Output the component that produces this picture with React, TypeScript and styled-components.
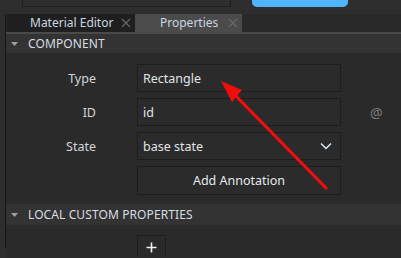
import React from "react";
import styled, { createGlobalStyle } from "styled-components";

const Global = createGlobalStyle`
  html, body { margin: 0; padding: 0; background: #2e2e2e; }
  body { font-family: "Noto Sans", "Open Sans", sans-serif; overflow: hidden; }
  #root { width: 401px; height: 258px; }
`;

const Page = styled.div`
  position: relative;
  width: 401px;
  height: 258px;
  background: #2e2e2e;
  display: flex;
  flex-direction: column;
  overflow: hidden;
`;

const TopStrip = styled.div`
  height: 14px;
  display: flex;
  align-items: flex-start;
  flex-shrink: 0;
`;

const TopBox = styled.div`
  margin-left: 22px;
  width: 207px;
  height: 6px;
  border: 1px solid #1f1f1f;
  border-top: none;
`;

const BlueButton = styled.div`
  margin-left: 21px;
  width: 96px;
  height: 7px;
  background: #50b4fe;
  border-radius: 0 0 5px 5px;
`;

const Main = styled.div`
  flex: 1;
  display: flex;
  min-height: 0;
`;

const Gutter = styled.div`
  width: 5px;
  flex-shrink: 0;
`;

const Divider = styled.div`
  width: 1px;
  height: 234px;
  background: #161616;
  flex-shrink: 0;
`;

const Panel = styled.div`
  flex: 1;
  display: flex;
  flex-direction: column;
  background: #2a2a2a;
`;

const TabBar = styled.div`
  height: 18px;
  display: flex;
  background: #292929;
  border-bottom: 2px solid #4a4a4a;
  flex-shrink: 0;
`;

const Tab = styled.div<{ $active?: boolean; $w: number; $pad: number }>`
  width: ${(p) => p.$w}px;
  padding-left: ${(p) => p.$pad}px;
  box-sizing: border-box;
  display: flex;
  align-items: center;
  justify-content: space-between;
  padding-right: 4px;
  background: ${(p) => (p.$active ? "#4b4b4b" : "#1f1f1f")};
  color: #c9d6e0;
  font-size: 12px;
  line-height: 18px;
  white-space: nowrap;
`;

const TabSpacer = styled.div`
  width: 1px;
`;

const CloseX = styled.svg`
  width: 10px;
  height: 10px;
  flex-shrink: 0;
`;

const SectionHeader = styled.div<{ $h: number }>`
  height: ${(p) => p.$h}px;
  display: flex;
  align-items: center;
  background: #333333;
  color: #d8dde2;
  font-size: 12px;
  letter-spacing: 0.1px;
  flex-shrink: 0;
`;

const Caret = styled.svg`
  width: 7px;
  height: 4px;
  margin-left: 5px;
  margin-right: 10px;
`;

const Body = styled.div<{ $pt: number; $pb: number }>`
  display: flex;
  flex-direction: column;
  gap: 6px;
  padding: ${(p) => p.$pt}px 0 ${(p) => p.$pb}px 0;
`;

const Row = styled.div`
  display: grid;
  grid-template-columns: 90px 204px 29px;
  column-gap: 41px;
  align-items: center;
  height: 28px;
`;

const Label = styled.div`
  text-align: right;
  color: #d2d6da;
  font-size: 12.5px;
`;

const Field = styled.div`
  height: 28px;
  box-sizing: border-box;
  border: 1px solid #1d1d1d;
  background: #2b2b2b;
  display: flex;
  align-items: center;
  justify-content: space-between;
  padding: 0 8px 0 5px;
  color: #e0e4e8;
  font-size: 12.5px;
`;

const Button = styled.div`
  height: 29px;
  box-sizing: border-box;
  border: 1px solid #1d1d1d;
  background: #2b2b2b;
  display: flex;
  align-items: center;
  justify-content: center;
  color: #e6e9ec;
  font-size: 12.5px;
`;

const Side = styled.div`
  color: #7b7b7b;
  font-size: 14px;
  text-align: left;
  margin-left: -12px;
`;

const PlusButton = styled.div`
  margin-left: 131px;
  width: 29px;
  height: 21px;
  box-sizing: border-box;
  border: 1px solid #1d1d1d;
  border-bottom: none;
  display: flex;
  align-items: center;
  justify-content: center;
  padding-top: 3px;
`;

const PlusIcon = styled.svg`
  width: 11px;
  height: 11px;
`;

const Arrow = styled.svg`
  position: absolute;
  left: 0;
  top: 0;
  width: 401px;
  height: 258px;
  pointer-events: none;
`;

const X = () => (
  <CloseX viewBox="0 0 10 10">
    <path d="M1 1L9 9M9 1L1 9" stroke="#6a6a6a" strokeWidth="1.1" />
  </CloseX>
);

export default function App() {
  return (
    <Page>
      <Global />
      <TopStrip>
        <TopBox />
        <BlueButton />
      </TopStrip>
      <Main>
        <Gutter />
        <Divider />
        <Panel>
          <TabBar>
            <TabSpacer />
            <Tab $w={128} $pad={23}>
              <span>Material Editor</span>
              <X />
            </Tab>
            <Tab $active $w={107} $pad={25}>
              <span>Properties</span>
              <X />
            </Tab>
          </TabBar>
          <SectionHeader $h={19}>
            <Caret viewBox="0 0 7 4">
              <path d="M0 0H7L3.5 4Z" fill="#a0a0a0" />
            </Caret>
            COMPONENT
          </SectionHeader>
          <Body $pt={11} $pb={10}>
            <Row>
              <Label>Type</Label>
              <Field>Rectangle</Field>
            </Row>
            <Row>
              <Label>ID</Label>
              <Field>id</Field>
              <Side>@</Side>
            </Row>
            <Row>
              <Label>State</Label>
              <Field>
                <span>base state</span>
                <svg width="12" height="8" viewBox="0 0 12 8">
                  <path d="M1 1.5L6 6.5L11 1.5" stroke="#dfe8f0" strokeWidth="1.5" fill="none" />
                </svg>
              </Field>
            </Row>
            <Row>
              <span />
              <Button>Add Annotation</Button>
            </Row>
          </Body>
          <SectionHeader $h={21}>
            <Caret viewBox="0 0 7 4">
              <path d="M0 0H7L3.5 4Z" fill="#a0a0a0" />
            </Caret>
            LOCAL CUSTOM PROPERTIES
          </SectionHeader>
          <Body $pt={10} $pb={0}>
            <PlusButton>
              <PlusIcon viewBox="0 0 11 11">
                <path d="M5.5 0.5V10.5M0.5 5.5H10.5" stroke="#eef0f2" strokeWidth="1.6" />
              </PlusIcon>
            </PlusButton>
          </Body>
        </Panel>
      </Main>
      <Arrow viewBox="0 0 401 258">
        <line x1="326" y1="188" x2="233" y2="93" stroke="#f20d0d" strokeWidth="3.2" strokeLinecap="round" />
        <path d="M221 81L242 90L232 102Z" fill="#f20d0d" />
      </Arrow>
    </Page>
  );
}
